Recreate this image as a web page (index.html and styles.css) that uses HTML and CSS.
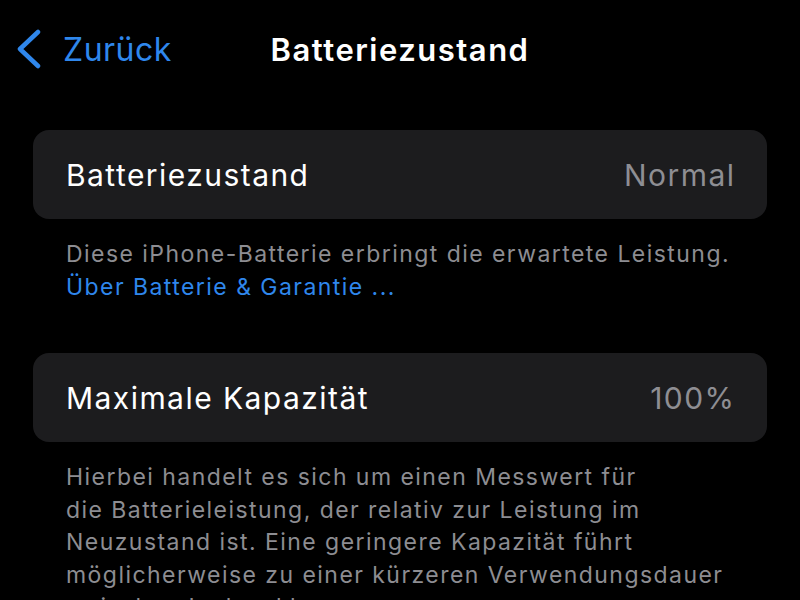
FILE: index.html
```html
<!DOCTYPE html>
<html lang="de">
<head>
    <meta charset="UTF-8">
    <meta name="viewport" content="width=device-width, initial-scale=1.0">
    <title>Batteriezustand</title>
    <link rel="stylesheet" href="styles.css">
</head>
<body>

    <!-- Navigation -->
    <div class="nav">
        <a class="back" href="#">
            <svg class="chevron" width="28" height="40" viewBox="0 0 28 40">
                <path d="M23 3 L5 20 L23 37" fill="none" stroke="currentColor" stroke-width="4.5" stroke-linecap="round" stroke-linejoin="round"/>
            </svg>
            <span>Zurück</span>
        </a>
        <h1 class="title">Batteriezustand</h1>
        <div></div>
    </div>

    <div class="content">
        <div class="section">
            <div class="cell">
                <span class="label">Batteriezustand</span>
                <span class="value">Normal</span>
            </div>
            <p class="footer">
                Diese iPhone-Batterie erbringt die erwartete Leistung.<br>
                <a href="#">Über Batterie &amp; Garantie ...</a>
            </p>
        </div>

        <div class="section">
            <div class="cell">
                <span class="label">Maximale Kapazität</span>
                <span class="value">100%</span>
            </div>
            <p class="footer">
                Hierbei handelt es sich um einen Messwert für<br>
                die Batterieleistung, der relativ zur Leistung im<br>
                Neuzustand ist. Eine geringere Kapazität führt<br>
                möglicherweise zu einer kürzeren Verwendungsdauer<br>
                zwischen Ladezyklen.
            </p>
        </div>
    </div>

</body>
</html>
```

FILE: styles.css
```css
body {
    margin: 0;
    padding: 0;
    background-color: #000;
    color: #fff;
    font-family: Inter, "Noto Sans", sans-serif;
    overflow: hidden;
}
.nav {
    display: grid;
    grid-template-columns: 1fr auto 1fr;
    align-items: center;
    height: 98px;
    padding: 0 18px;
}
.back {
    display: flex;
    align-items: center;
    gap: 20px;
    color: #2f87ec;
    text-decoration: none;
    font-size: 32px;
    letter-spacing: 0.5px;
}
.chevron {
    margin-left: -3px;
}
.title {
    margin: 0;
    font-size: 31px;
    font-weight: 600;
    letter-spacing: 1.5px;
    color: #fff;
}
.content {
    padding: 32px 33px 0;
}
.section {
    margin-bottom: 50px;
}
.cell {
    display: flex;
    justify-content: space-between;
    align-items: center;
    height: 89px;
    padding: 0 33px;
    background: #1c1c1e;
    border-radius: 16px;
    font-size: 30px;
    letter-spacing: 1.45px;
}
.value {
    color: #8e8e93;
    margin-right: -1.5px;
}
.footer {
    margin: 0;
    padding: 19px 33px 0;
    font-size: 23px;
    line-height: 32.5px;
    letter-spacing: 1.45px;
    color: #8d8d92;
}
.footer a {
    color: #2f87ec;
    text-decoration: none;
}
```
